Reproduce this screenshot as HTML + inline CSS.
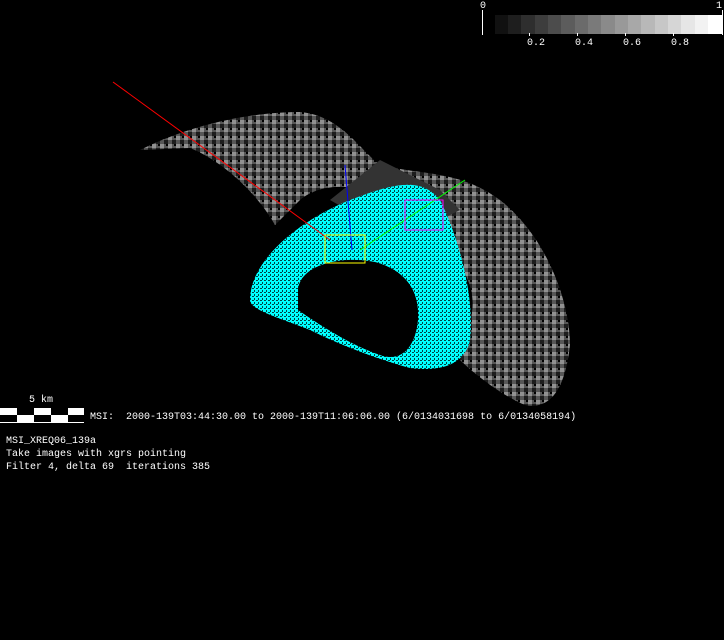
<!DOCTYPE html>
<html><head><style>
body{margin:0;background:#000;width:724px;height:640px;overflow:hidden;position:relative;font-family:"Liberation Mono",monospace;color:#fff}
.t{position:absolute;font-size:10px;white-space:pre;line-height:13px}
</style></head><body>
<svg width="724" height="640" style="position:absolute;left:0;top:0">
<defs>
<pattern id="gp" width="8" height="8" patternUnits="userSpaceOnUse">
<rect width="8" height="8" fill="#666"/><rect width="4" height="4" fill="#aaa"/><rect x="4" y="4" width="4" height="4" fill="#222"/><rect x="6" y="0" width="2" height="2" fill="#000"/>
</pattern>
<pattern id="cp" width="4" height="4" patternUnits="userSpaceOnUse">
<rect width="4" height="4" fill="#0ff"/><rect width="2" height="1" fill="#044"/><rect x="2" y="2" width="1" height="2" fill="#044"/>
</pattern>
</defs>
<path d="M140,150 C190,125 250,112 300,112 C340,115 360,150 380,165 C420,175 460,170 500,200 C545,235 570,300 570,345 C565,390 550,410 525,405 C500,395 470,370 460,360 L470,320 C480,290 460,260 440,240 L420,210 C380,190 330,175 300,200 L275,225 C255,190 220,160 190,148 Z" fill="url(#gp)" opacity="0.85"/>
<path d="M330,200 L380,160 L440,190 L460,210 L400,240 Z" fill="#333"/>
<path d="M250,300 C250,260 300,220 350,200 C390,185 420,175 440,200 C460,240 475,300 470,340 C465,365 440,372 410,368 C380,360 340,345 310,330 C280,318 250,310 250,300 Z" fill="url(#cp)"/>
<path d="M298,290 C300,265 340,255 375,262 C405,270 420,290 418,320 C415,350 400,362 380,355 C350,345 320,325 298,310 Z" fill="#000"/>
<line x1="113" y1="82" x2="330" y2="240" stroke="#f00" stroke-width="1"/>
<line x1="345" y1="165" x2="352" y2="250" stroke="#00f" stroke-width="1"/>
<line x1="360" y1="250" x2="465" y2="180" stroke="#0f0" stroke-width="1"/>
<rect x="325" y="235" width="40" height="28" fill="none" stroke="#ff0"/>
<rect x="405" y="200" width="38" height="30" fill="none" stroke="#f0f"/>
<line x1="482.5" y1="10" x2="482.5" y2="35" stroke="#fff"/>
<line x1="722.5" y1="10" x2="722.5" y2="35" stroke="#fff"/>
<g>
<rect x="495" y="15" width="14" height="19" fill="#111"/><rect x="508" y="15" width="14" height="19" fill="#1e1e1e"/><rect x="521" y="15" width="15" height="19" fill="#2e2e2e"/><rect x="535" y="15" width="14" height="19" fill="#3d3d3d"/><rect x="548" y="15" width="14" height="19" fill="#4c4c4c"/><rect x="561" y="15" width="15" height="19" fill="#5c5c5c"/><rect x="575" y="15" width="14" height="19" fill="#6b6b6b"/><rect x="588" y="15" width="14" height="19" fill="#7a7a7a"/><rect x="601" y="15" width="15" height="19" fill="#8a8a8a"/><rect x="615" y="15" width="14" height="19" fill="#999"/><rect x="628" y="15" width="14" height="19" fill="#a8a8a8"/><rect x="641" y="15" width="15" height="19" fill="#b8b8b8"/><rect x="655" y="15" width="14" height="19" fill="#c7c7c7"/><rect x="668" y="15" width="14" height="19" fill="#d6d6d6"/><rect x="681" y="15" width="15" height="19" fill="#e6e6e6"/><rect x="695" y="15" width="14" height="19" fill="#f2f2f2"/><rect x="708" y="15" width="15" height="19" fill="#fff"/>
</g>
<g stroke="#fff"><line x1="529.5" y1="33" x2="529.5" y2="36"/><line x1="577.5" y1="33" x2="577.5" y2="36"/><line x1="625.5" y1="33" x2="625.5" y2="36"/><line x1="673.5" y1="33" x2="673.5" y2="36"/></g>
<rect x="0" y="408" width="84" height="15" fill="#fff"/>
<rect x="17" y="408" width="17" height="7" fill="#000"/><rect x="51" y="408" width="17" height="7" fill="#000"/>
<rect x="0" y="415" width="17" height="7" fill="#000"/><rect x="34" y="415" width="17" height="7" fill="#000"/><rect x="68" y="415" width="16" height="7" fill="#000"/>
</svg>
<div class="t" style="left:480px;top:0px">0</div>
<div class="t" style="left:716px;top:0px">1</div>
<div class="t" style="left:527px;top:37px">0.2</div>
<div class="t" style="left:575px;top:37px">0.4</div>
<div class="t" style="left:623px;top:37px">0.6</div>
<div class="t" style="left:671px;top:37px">0.8</div>
<div class="t" style="left:29px;top:394px">5 km</div>
<div class="t" style="left:90px;top:411px">MSI:  2000-139T03:44:30.00 to 2000-139T11:06:06.00 (6/0134031698 to 6/0134058194)</div>
<div class="t" style="left:6px;top:435px">MSI_XREQ06_139a
Take images with xgrs pointing
Filter 4, delta 69  iterations 385</div>
</body></html>
